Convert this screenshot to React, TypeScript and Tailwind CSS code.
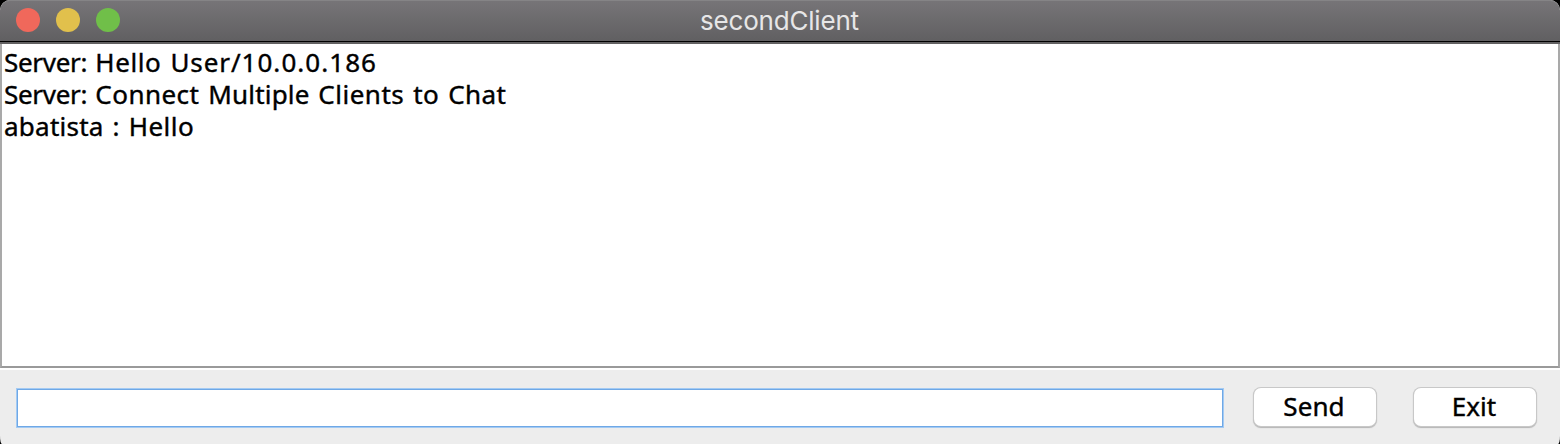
type Word = { text: string; tracking: string };

const messages: Word[][] = [
  [
    { text: "Server: ", tracking: "tracking-[-0.3px]" },
    { text: "Hello ", tracking: "tracking-[0.6px]" },
    { text: "User/", tracking: "tracking-[0.9px]" },
    { text: "10.0.0.186", tracking: "tracking-[1.05px]" },
  ],
  [
    { text: "Server: ", tracking: "tracking-[-0.3px]" },
    { text: "Connect ", tracking: "tracking-[0.45px]" },
    { text: "Multiple ", tracking: "tracking-[0.2px]" },
    { text: "Clients ", tracking: "tracking-[0.5px]" },
    { text: "to ", tracking: "tracking-[0.5px]" },
    { text: "Chat", tracking: "tracking-[0.4px]" },
  ],
  [
    { text: "abatista ", tracking: "tracking-[0.25px]" },
    { text: ": ", tracking: "tracking-[0.4px]" },
    { text: "Hello", tracking: "tracking-[0.5px]" },
  ],
];

function TitleBar() {
  return (
    <header className="grid h-[44px] shrink-0 grid-cols-[1fr_auto_1fr] items-center rounded-t-[10px] border-b-2 border-[#626162] bg-linear-to-b from-[#777578] to-[#605f61] px-4 shadow-[inset_0_-1px_0_#000,inset_0_1px_0_#858486]">
      <div className="flex gap-4 pb-[2px]">
        <span className="size-6 rounded-full bg-[#f0685b]" />
        <span className="size-6 rounded-full bg-[#e1c04c]" />
        <span className="size-6 rounded-full bg-[#70bf49]" />
      </div>
      <h1 className="pr-px font-['Inter',sans-serif] text-[26px] leading-8 tracking-[-0.2px] text-[#e7e6e7]">
        secondClient
      </h1>
    </header>
  );
}

function PushButton({ label }: { label: string }) {
  return (
    <button className="flex h-[38px] w-[122px] items-center justify-center rounded-[7px] bg-white pr-[2px] pb-[3px] text-[26px] leading-8 tracking-[0.1px] shadow-[0_0_0_1px_#c8c8c8,0_1px_1px_1px_#b4b4b4] [-webkit-text-stroke:0.4px_black]">
      {label}
    </button>
  );
}

export default function App() {
  return (
    <div className="h-[444px] w-[1560px] bg-black font-['Noto_Sans',sans-serif] text-black">
      <div className="flex h-full flex-col overflow-hidden rounded-t-[10px] rounded-b-[2px_8px] bg-[#ededed] [border-bottom-left-radius:2px_8px] [border-bottom-right-radius:2px_8px]">
        <TitleBar />
        <main className="h-[324px] shrink-0 border-x-2 border-b-2 border-[#9a9a9a] border-x-[#a9a9a9] bg-white pt-[2px] pl-[2px]">
          {messages.map((words, i) => (
            <p
              key={i}
              className="h-8 text-[26px] leading-8 whitespace-pre [-webkit-text-stroke:0.4px_black] [word-spacing:1.7px]"
            >
              {words.map((w) => (
                <span key={w.text} className={w.tracking}>
                  {w.text}
                </span>
              ))}
            </p>
          ))}
        </main>
        <footer className="flex flex-1 items-start border-t-2 border-white pt-[18px] pl-4">
          <input
            aria-label="Message"
            className="h-10 w-[1208px] border border-[#a3caf3] bg-white px-1 text-[26px] shadow-[inset_0_0_0_1px_#6fa8e6] outline-none"
          />
          <div className="ml-[30px] flex gap-[38px]">
            <PushButton label="Send" />
            <PushButton label="Exit" />
          </div>
        </footer>
      </div>
    </div>
  );
}
